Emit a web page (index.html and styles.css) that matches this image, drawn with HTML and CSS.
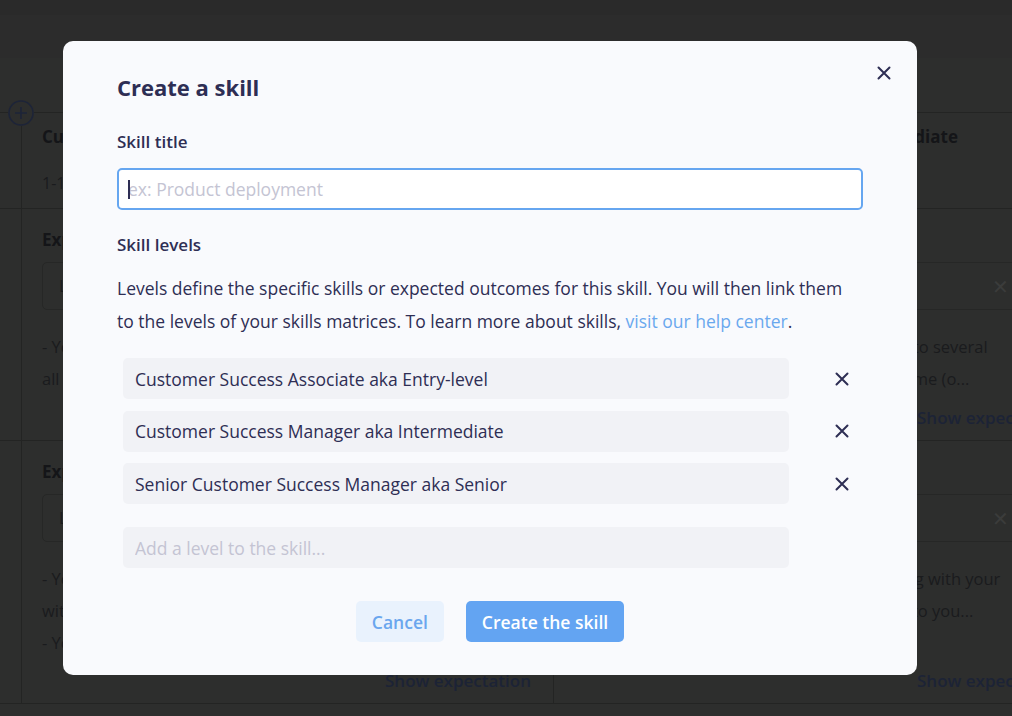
FILE: index.html
```html
<!DOCTYPE html>
<html lang="en">
<head>
    <meta charset="UTF-8">
    <title>Create a skill</title>
    <link rel="stylesheet" href="styles.css">
</head>
<body>
    <div class="page">
        <div class="topbar"></div>
        <div class="subbar"></div>
        <div class="toolbar"></div>

        <div class="matrix">
            <div class="matrix-row row-head">
                <div class="gutter">
                    <span class="add-level">
                        <svg width="26" height="26" viewBox="0 0 26 26"><circle cx="13" cy="13" r="12" fill="none" stroke="#1d2438" stroke-width="1.6"/><path d="M13 7v12M7 13h12" stroke="#1d2438" stroke-width="1.6"/></svg>
                    </span>
                </div>
                <div class="cell">
                    <h3>Customer Success Associate aka Entry-level</h3>
                    <p class="cell-sub">1-1, onboarding calls, first renewals</p>
                </div>
                <div class="cell">
                    <h3>Customer Success Manager aka Intermediate</h3>
                    <p class="cell-sub"></p>
                </div>
            </div>

            <div class="matrix-row row-a">
                <div class="gutter"></div>
                <div class="cell">
                    <h4>Expectations</h4>
                    <div class="cell-box"><span>Level expectations</span></div>
                    <div class="cell-text">
                        <div>- You handle a portfolio of small accounts and</div>
                        <div>all onboarding calls with the support of a m...</div>
                    </div>
                </div>
                <div class="cell">
                    <h4>Expectations</h4>
                    <div class="cell-box"><span>Level expectations</span><i class="box-x">&#x2715;</i></div>
                    <div class="cell-text">
                        <div>- You manage portfolio of accounts and talk to several</div>
                        <div>stakeholders of one customer at the same time (o...</div>
                    </div>
                    <a class="show-more">Show expectation</a>
                </div>
            </div>

            <div class="matrix-row row-b">
                <div class="gutter"></div>
                <div class="cell">
                    <h4>Expectations</h4>
                    <div class="cell-box"><span>Level expectations</span></div>
                    <div class="cell-text">
                        <div>- You run the weekly check-ins with your accounts</div>
                        <div>with the help of the team lead</div>
                        <div>- You escalate issues to the product team</div>
                    </div>
                    <a class="show-more">Show expectation</a>
                </div>
                <div class="cell">
                    <h4>Expectations</h4>
                    <div class="cell-box"><span>Level expectations</span><i class="box-x">&#x2715;</i></div>
                    <div class="cell-text">
                        <div>- You own the renewals cycle and are working with your</div>
                        <div>customers on their own goals so they come to you...</div>
                    </div>
                    <a class="show-more">Show expectation</a>
                </div>
            </div>
        </div>
    </div>

    <div class="backdrop">
        <div class="modal">
            <button class="modal-close" type="button">
                <svg width="14" height="14" viewBox="0 0 14 14"><path d="M1.5 1.5l11 11M12.5 1.5l-11 11" stroke="#2e2e54" stroke-width="2" stroke-linecap="round"/></svg>
            </button>

            <h2 class="modal-title">Create a skill</h2>

            <label class="field-label" for="skillTitle">Skill title</label>
            <div class="title-input">
                <input type="text" id="skillTitle" placeholder="ex: Product deployment">
            </div>

            <div class="field-label levels-label">Skill levels</div>
            <p class="hint">Levels define the specific skills or expected outcomes for this skill. You will then link them to the levels of your skills matrices. To learn more about skills, <a href="#">visit our help center</a>.</p>

            <ul class="levels">
                <li class="level">
                    <span class="level-name">Customer Success Associate aka Entry-level</span>
                    <button class="level-remove" type="button"><svg width="14" height="14" viewBox="0 0 14 14"><path d="M1.5 1.5l11 11M12.5 1.5l-11 11" stroke="#2e2e54" stroke-width="2" stroke-linecap="round"/></svg></button>
                </li>
                <li class="level">
                    <span class="level-name">Customer Success Manager aka Intermediate</span>
                    <button class="level-remove" type="button"><svg width="14" height="14" viewBox="0 0 14 14"><path d="M1.5 1.5l11 11M12.5 1.5l-11 11" stroke="#2e2e54" stroke-width="2" stroke-linecap="round"/></svg></button>
                </li>
                <li class="level">
                    <span class="level-name">Senior Customer Success Manager aka Senior</span>
                    <button class="level-remove" type="button"><svg width="14" height="14" viewBox="0 0 14 14"><path d="M1.5 1.5l11 11M12.5 1.5l-11 11" stroke="#2e2e54" stroke-width="2" stroke-linecap="round"/></svg></button>
                </li>
                <li class="level level-new">
                    <input class="level-name" type="text" placeholder="Add a level to the skill...">
                    <span class="level-spacer"></span>
                </li>
            </ul>

            <div class="modal-actions">
                <button type="button" class="btn btn-cancel">Cancel</button>
                <button type="button" class="btn btn-create">Create the skill</button>
            </div>
        </div>
    </div>
</body>
</html>
```

FILE: styles.css
```css
* { margin: 0; padding: 0; box-sizing: border-box; }
body {
    font-family: "Open Sans", "Liberation Sans", sans-serif;
    background-color: #2d2e2d;
    overflow: hidden;
    height: 100vh;
}

/* dimmed page behind the modal */
.page {
    color: #1a1b1d;
    overflow: hidden;
}
.topbar {
    height: 15px;
    background-color: #2a2a2a;
}
.subbar {
    height: 43px;
    background-color: #2c2c2c;
}
.toolbar {
    height: 54px;
}
.matrix {
    border-top: 1px solid #232423;
    width: 1100px;
}
.matrix-row {
    display: grid;
    grid-template-columns: 22px 532px 532px;
    border-bottom: 1px solid #232423;
}
.row-head { height: 96px; }
.row-a { height: 232px; }
.row-b { height: 263px; }
.gutter {
    border-right: 1px solid #232423;
    position: relative;
}
.add-level {
    position: absolute;
    left: 8px;
    top: -13px;
    background-color: #2d2e2d;
    border-radius: 50%;
    display: flex;
}
.cell {
    border-right: 1px solid #232423;
    padding: 12px 20px 10px 20px;
    display: flex;
    flex-direction: column;
}
.cell h3 {
    font-size: 17px;
    line-height: 24px;
    font-weight: 700;
    color: #141518;
    white-space: nowrap;
}
.cell-sub {
    margin-top: 22px;
    font-size: 16px;
    line-height: 24px;
}
.cell h4 {
    margin-top: 7px;
    font-size: 17px;
    line-height: 24px;
    font-weight: 700;
    color: #141518;
}
.cell-box {
    margin-top: 10px;
    height: 48px;
    width: 450px;
    border: 1px solid #262726;
    border-radius: 5px;
    display: flex;
    align-items: center;
    justify-content: space-between;
    padding: 0 14px 0 16px;
    font-size: 16px;
}
.box-x {
    font-style: normal;
    color: #3b3c3b;
    font-size: 20px;
}
.cell-text {
    margin-top: 21px;
    font-size: 16.5px;
    line-height: 32px;
    white-space: nowrap;
}
.show-more {
    margin-top: auto;
    align-self: flex-end;
    margin-right: 2px;
    font-size: 17px;
    line-height: 24px;
    font-weight: 600;
    color: #1c2336;
}

/* modal */
.backdrop {
    position: fixed;
    inset: 0;
    display: flex;
    align-items: center;
    justify-content: center;
    padding-right: 32px;
}
.modal {
    position: relative;
    width: 854px;
    background-color: #f9fafd;
    border-radius: 10px;
    padding: 31px 54px 33px;
    color: #2e2e54;
}
.modal-close {
    position: absolute;
    top: 20px;
    right: 21px;
    width: 24px;
    height: 24px;
    border: none;
    background: none;
    display: flex;
    align-items: center;
    justify-content: center;
    cursor: pointer;
}
.modal-title {
    font-size: 22px;
    line-height: 30px;
    font-weight: 700;
}
.field-label {
    display: block;
    margin-top: 28px;
    font-size: 17px;
    line-height: 24px;
    font-weight: 600;
}
.title-input {
    position: relative;
    margin-top: 14px;
}
.title-input::before {
    content: '';
    position: absolute;
    left: 11px;
    top: 12px;
    width: 2px;
    height: 19px;
    background-color: #2e2e54;
}
.title-input input {
    width: 100%;
    height: 42px;
    border: 2px solid #66a6f0;
    border-radius: 5px;
    background-color: #fff;
    padding: 0 9px;
    font-family: inherit;
    font-size: 17.5px;
    color: #2e2e54;
    outline: none;
}
.title-input input::placeholder,
.level-new input::placeholder {
    color: #c4c4d3;
}
.levels-label {
    margin-top: 23px;
}
.hint {
    margin-top: 15px;
    font-size: 17.5px;
    line-height: 33px;
}
.hint a {
    color: #6aa8ee;
    text-decoration: none;
}
.levels {
    list-style: none;
    margin-top: 20px;
    display: flex;
    flex-direction: column;
    gap: 11.5px;
}
.level {
    display: flex;
    align-items: center;
    gap: 32px;
    padding-left: 6px;
}
.level-name {
    flex: 1;
    height: 41px;
    display: flex;
    align-items: center;
    padding: 0 12px;
    background-color: #f1f2f6;
    border-radius: 5px;
    font-size: 17.5px;
    color: #2e2e54;
}
.level-remove, .level-spacer {
    width: 42px;
    height: 41px;
    border: none;
    background: none;
    display: flex;
    align-items: center;
    justify-content: center;
    cursor: pointer;
}
.level-new {
    margin-top: 11.5px;
}
.level-new input {
    border: none;
    font-family: inherit;
    outline: none;
}
.modal-actions {
    margin-top: 33px;
    display: flex;
    justify-content: center;
    gap: 22px;
}
.btn {
    height: 41px;
    padding: 0 16px;
    border: none;
    border-radius: 5px;
    font-family: inherit;
    font-size: 17.5px;
    font-weight: 600;
    cursor: pointer;
}
.btn-cancel {
    background-color: #e9f2fd;
    color: #6aa6ee;
}
.btn-create {
    background-color: #63a4f2;
    color: #fff;
}
```
